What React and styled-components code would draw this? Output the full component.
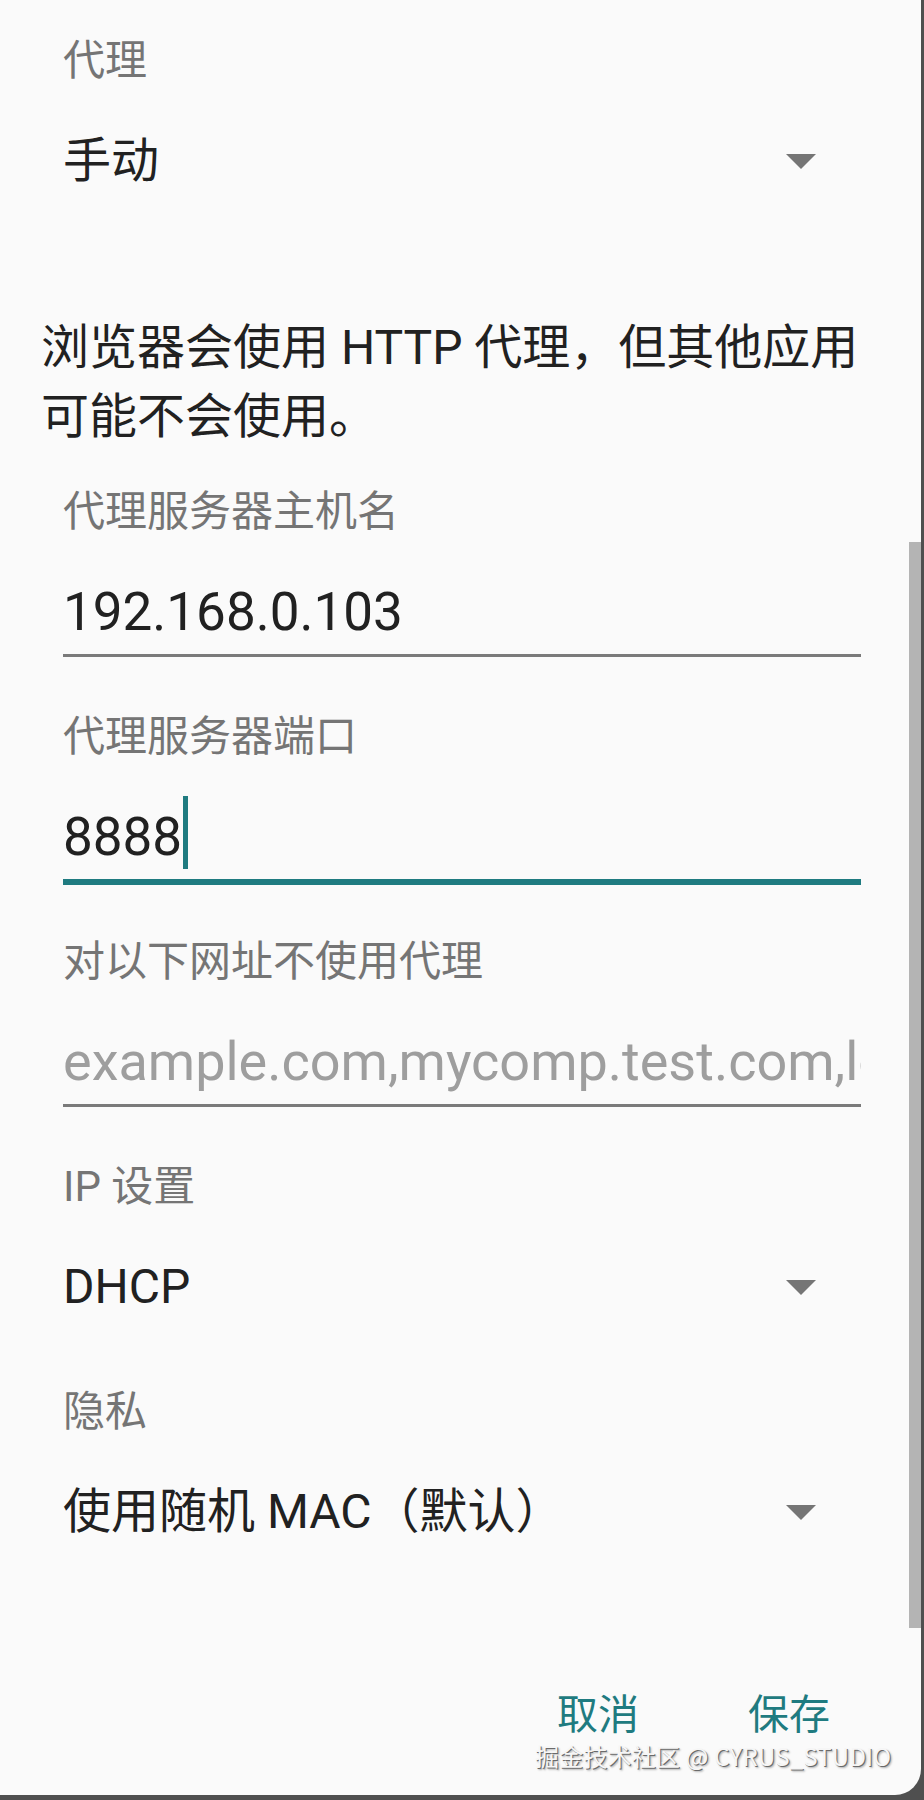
import React from 'react';
import styled, { createGlobalStyle } from 'styled-components';

const colors = {
  surface: '#fafafa',
  scrim: '#4f4f4f',
  text: '#212121',
  secondary: '#757575',
  hint: '#9e9e9e',
  line: '#7a7a7a',
  accent: '#1f7b80',
  thumb: '#b4b4b4',
};

const fontStack = 'Roboto, "Noto Sans CJK SC", sans-serif';

const GlobalStyle = createGlobalStyle`
  html, body {
    margin: 0;
    padding: 0;
    background: ${colors.scrim};
  }
  body {
    font-family: ${fontStack};
  }
`;

const Dialog = styled.div`
  position: relative;
  display: flex;
  flex-direction: column;
  width: 921px;
  height: 1795px;
  background: ${colors.surface};
  border-bottom-right-radius: 26px;
  overflow: hidden;
  font-family: ${fontStack};
`;

const Field = styled.div`
  display: flex;
  flex-direction: column;
  padding-left: 63px;
  margin-top: ${p => p.$gap}px;
`;

const Label = styled.div`
  height: 50px;
  font-size: 42px;
  line-height: 50px;
  color: ${colors.secondary};
`;

const SpinnerRow = styled.div`
  display: flex;
  align-items: center;
  justify-content: space-between;
  box-sizing: border-box;
  width: 798px;
  height: 50px;
  margin-top: 50px;
  padding-right: 45px;
`;

const ValueText = styled.span`
  font-size: ${p => p.$size || 48}px;
  line-height: 50px;
  color: ${colors.text};
  white-space: nowrap;
`;

const InputBox = styled.div`
  display: flex;
  align-items: center;
  width: 798px;
  height: 50px;
  margin-top: 50px;
`;

const InputText = styled.span`
  min-width: 0;
  font-size: ${p => (p.$placeholder ? 54 : 53)}px;
  line-height: 50px;
  white-space: nowrap;
  overflow-x: ${p => (p.$placeholder ? 'clip' : 'visible')};
  color: ${p => (p.$placeholder ? colors.hint : colors.text)};
`;

const Cursor = styled.span`
  flex: none;
  width: 5px;
  height: 73px;
  margin: 0 0 9px 1px;
  background: ${colors.accent};
`;

const Underline = styled.div`
  box-sizing: border-box;
  width: 798px;
  height: 6px;
  margin-top: 17px;
  border-top: ${p => (p.$focused ? 6 : 3)}px solid
    ${p => (p.$focused ? colors.accent : colors.line)};
`;

const Message = styled.p`
  box-sizing: border-box;
  width: 881px;
  margin: 127px 0 0;
  padding-left: 41px;
  font-size: 48px;
  line-height: 69px;
  color: ${colors.text};
`;

const ButtonBar = styled.div`
  display: flex;
  justify-content: flex-end;
  gap: 61px;
  margin-top: auto;
  padding: 0 67px 55px 0;
`;

const TextButton = styled.button`
  height: 50px;
  padding: 0 24px;
  border: 0;
  background: none;
  font-family: ${fontStack};
  font-size: 41px;
  font-weight: 400;
  line-height: 50px;
  color: ${colors.accent};
`;

const ScrollThumb = styled.div`
  position: absolute;
  top: 542px;
  right: 0;
  width: 12px;
  height: 1086px;
  background: ${colors.thumb};
`;

const Watermark = styled.div`
  position: absolute;
  left: 535px;
  top: 1741px;
  font-family: "Noto Sans CJK SC", sans-serif;
  font-size: 24px;
  line-height: 30px;
  letter-spacing: 0.2px;
  color: #f6f6f6;
  white-space: nowrap;
  text-shadow: 1px 1px 0 #6a6a6a, 2px 2px 2px rgba(0, 0, 0, 0.3);
`;

const DropArrow = () => (
  <svg width="30" height="15" viewBox="0 0 30 15">
    <path d="M0 0h30L15 15z" fill={colors.secondary} />
  </svg>
);

const SpinnerField = ({ label, value, gap }) => (
  <Field $gap={gap}>
    <Label>{label}</Label>
    <SpinnerRow>
      <ValueText>{value}</ValueText>
      <DropArrow />
    </SpinnerRow>
  </Field>
);

const TextField = ({ label, value, placeholder, focused, gap }) => (
  <Field $gap={gap}>
    <Label>{label}</Label>
    <InputBox>
      <InputText $placeholder={!value}>{value || placeholder}</InputText>
      {focused && <Cursor />}
    </InputBox>
    <Underline $focused={focused} />
  </Field>
);

const App = () => (
  <>
    <GlobalStyle />
    <Dialog>
      <SpinnerField label="代理" value="手动" gap={36} />
      <Message>浏览器会使用 HTTP 代理，但其他应用可能不会使用。</Message>
      <TextField label="代理服务器主机名" value="192.168.0.103" gap={36} />
      <TextField label="代理服务器端口" value="8888" focused gap={52} />
      <TextField
        label="对以下网址不使用代理"
        placeholder="example.com,mycomp.test.com,localhost"
        gap={52}
      />
      <SpinnerField label="IP 设置" value="DHCP" gap={52} />
      <SpinnerField label="隐私" value="使用随机 MAC（默认）" gap={75} />
      <ButtonBar>
        <TextButton>取消</TextButton>
        <TextButton>保存</TextButton>
      </ButtonBar>
      <ScrollThumb />
      <Watermark>掘金技术社区 @ CYRUS_STUDIO</Watermark>
    </Dialog>
  </>
);

export default App;
